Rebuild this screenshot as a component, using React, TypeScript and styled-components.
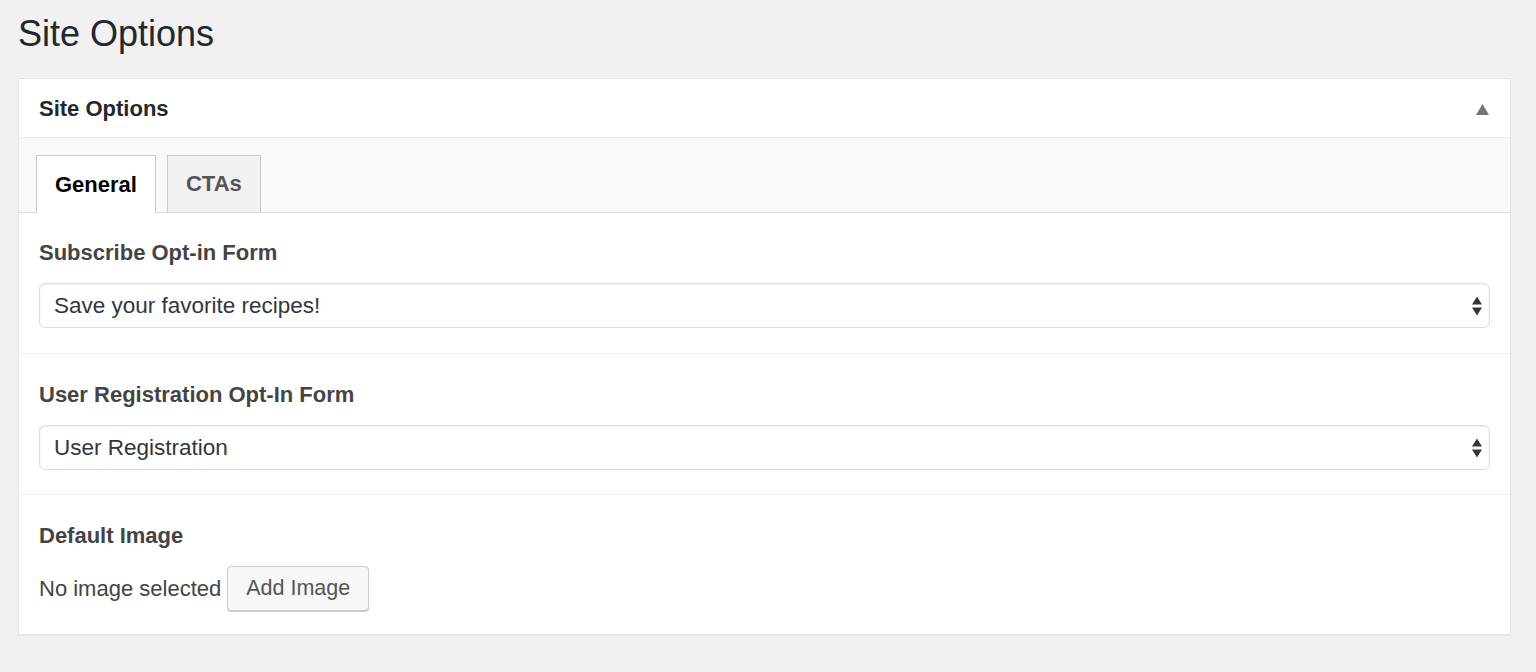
import React from "react";
import styled, { createGlobalStyle } from "styled-components";

const GlobalStyle = createGlobalStyle`
  html, body {
    margin: 0;
    padding: 0;
    background: #f1f1f1;
    font-family: "Liberation Sans", Arial, Helvetica, sans-serif;
    color: #444;
  }
  * { box-sizing: border-box; }
`;

const Page = styled.div`
  padding: 14px 25px 40px 18px;
`;

const PageTitle = styled.h1`
  margin: 0 0 24px;
  font-size: 36px;
  line-height: 40px;
  font-weight: 400;
  color: #23282d;
`;

const Panel = styled.div`
  background: #fff;
  border: 1px solid #e5e5e5;
  box-shadow: 0 1px 1px rgba(0, 0, 0, 0.04);
`;

const PanelHeader = styled.div`
  height: 59px;
  display: flex;
  align-items: center;
  justify-content: space-between;
  padding: 2px 21px 0 20px;
  border-bottom: 1px solid #eee;
`;

const PanelTitle = styled.h2`
  margin: 0;
  font-size: 22px;
  font-weight: 700;
  color: #23282d;
`;

const Toggle = styled.button`
  border: 0;
  background: none;
  padding: 0;
  margin: 0;
  width: 13px;
  height: 11px;
  display: flex;
  color: #72777c;
  cursor: pointer;
`;

const TabBar = styled.div`
  display: flex;
  align-items: flex-end;
  gap: 11px;
  height: 75px;
  padding: 17px 19px 0 17px;
  background: #f9f9f9;
  border-bottom: 1px solid #ddd;
`;

const Tab = styled.button<{ $active?: boolean }>`
  height: ${(p) => (p.$active ? "58px" : "57px")};
  margin-bottom: ${(p) => (p.$active ? "-1px" : "0")};
  padding: 0 18px;
  border: 1px solid #ccc;
  border-bottom: 0;
  background: ${(p) => (p.$active ? "#fff" : "#f1f1f1")};
  color: ${(p) => (p.$active ? "#000" : "#555")};
  font-family: inherit;
  font-size: 22px;
  font-weight: 700;
  line-height: 56px;
  cursor: pointer;
`;

const Section = styled.div`
  padding: 27px 20px 24px;
  border-bottom: 1px solid #eee;
  &:first-of-type {
    padding-top: 26px;
    padding-bottom: 25px;
  }
  &:last-of-type {
    border-bottom: 0;
    padding-bottom: 23px;
  }
`;

const Label = styled.label`
  display: block;
  font-size: 22px;
  line-height: 28px;
  font-weight: 700;
  color: #444;
  margin-bottom: 16px;
`;

const SelectWrap = styled.div`
  position: relative;
`;

const Select = styled.select`
  appearance: none;
  -webkit-appearance: none;
  display: block;
  width: 100%;
  height: 45px;
  margin: 0;
  padding: 0 40px 0 14px;
  border: 1px solid #ddd;
  border-radius: 6px;
  background: #fff;
  box-shadow: inset 0 1px 2px rgba(0, 0, 0, 0.07);
  font-family: inherit;
  font-size: 22.5px;
  color: #32373c;
  outline: none;
`;

const Arrows = styled.svg`
  position: absolute;
  right: 8px;
  top: 50%;
  transform: translateY(-50%);
  pointer-events: none;
`;

const ImageRow = styled.div`
  display: flex;
  align-items: center;
`;

const ImageStatus = styled.span`
  font-size: 22px;
  color: #444;
`;

const Button = styled.button`
  margin-left: 6px;
  height: 45px;
  padding: 0 18px;
  border: 1px solid #ccc;
  border-radius: 4px;
  background: #f7f7f7;
  box-shadow: 0 1px 0 #ccc;
  color: #555;
  font-family: inherit;
  font-size: 21.5px;
  cursor: pointer;
`;

const SelectField: React.FC<{ label: string; value: string; id: string }> = ({
  label,
  value,
  id,
}) => (
  <Section>
    <Label htmlFor={id}>{label}</Label>
    <SelectWrap>
      <Select id={id} defaultValue={value}>
        <option value={value}>{value}</option>
      </Select>
      <Arrows width="10" height="19" viewBox="0 0 10 19" aria-hidden="true">
        <path d="M5 0 L10 8 L0 8 Z" fill="#32373c" />
        <path d="M0 11 L10 11 L5 19 Z" fill="#32373c" />
      </Arrows>
    </SelectWrap>
  </Section>
);

export default function App() {
  return (
    <>
      <GlobalStyle />
      <Page>
        <PageTitle>Site Options</PageTitle>
        <Panel>
          <PanelHeader>
            <PanelTitle>Site Options</PanelTitle>
            <Toggle aria-label="Toggle panel">
              <svg width="13" height="11" viewBox="0 0 13 11">
                <path d="M6.5 0 L13 11 L0 11 Z" fill="currentColor" />
              </svg>
            </Toggle>
          </PanelHeader>
          <TabBar>
            <Tab $active>General</Tab>
            <Tab>CTAs</Tab>
          </TabBar>
          <div>
            <SelectField
              id="subscribe"
              label="Subscribe Opt-in Form"
              value="Save your favorite recipes!"
            />
            <SelectField
              id="registration"
              label="User Registration Opt-In Form"
              value="User Registration"
            />
            <Section>
              <Label as="div">Default Image</Label>
              <ImageRow>
                <ImageStatus>No image selected</ImageStatus>
                <Button>Add Image</Button>
              </ImageRow>
            </Section>
          </div>
        </Panel>
      </Page>
    </>
  );
}
